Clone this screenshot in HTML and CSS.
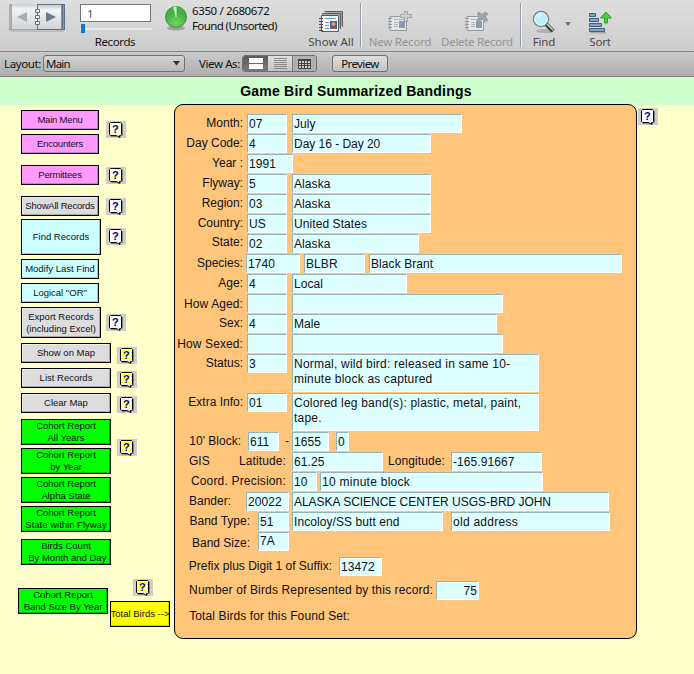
FILE: index.html
```html
<!DOCTYPE html>
<html lang="en">
<head>
<meta charset="utf-8">
<title>Game Bird Summarized Bandings</title>
<link rel="stylesheet" href="styles.css">
</head>
<body>
<svg class="defs" width="0" height="0">
  <defs>
    <g id="note-frame">
      <path d="M5 15.500H12M16.500 3V14.500H14.500V16.500" fill="none" stroke="#808080"/>
      <path d="M4.500 1.500H14.500L15.500 2.500V13.500L14.500 14.500H13.500V16.500L10.500 14.500H4.500L3.500 13.500V2.500Z" fill="#fff" stroke="#000"/>
    </g>
    <path id="dots" d="M5 3.500H15M4 5.500H15M5 7.500H15M4 9.500H15M5 11.500H15M4 13.500H14" stroke-dasharray="1 1" fill="none" shape-rendering="crispEdges"/>
    <symbol id="help" viewBox="0 0 20 17"><rect width="20" height="17" fill="#d0cdc9"/><use href="#note-frame"/><use href="#dots" stroke="#ffff99"/><text x="6" y="12">?</text></symbol>
    <symbol id="help-yellow" viewBox="0 0 20 17"><rect width="20" height="17" fill="#d0cdc9"/><use href="#note-frame"/><use href="#dots" stroke="#ffff00"/><path d="M4 4.500H15M5 6.500H15M4 8.500H15M5 10.500H15M4 12.500H15" stroke="#ffff66" stroke-dasharray="1 1" shape-rendering="crispEdges"/><text x="6" y="12">?</text></symbol>
    <symbol id="card" viewBox="0 0 24 24">
      <path d="M3 6.500H19.500V20.500H3Z" fill="#f4f5f6" stroke="#56606b"/>
      <path d="M1 8.500h4M1 11.500h4M1 14.500h4M1 17.500h4" stroke="#56606b"/>
      <path d="M7 9.500h10M7 12.500h4M7 14.500h4M7 16.500h4" stroke="#8494a5"/>
      <rect x="12" y="11" width="6" height="7" fill="#46648a"/>
    </symbol>
  </defs>
</svg>

<header class="toolbar">
  <svg class="book" width="60" height="32" viewBox="0 0 60 32">
    <defs><linearGradient id="page" x2="0" y2="1"><stop stop-color="#c9ced2"/><stop offset=".2" stop-color="#f2f3f4"/><stop offset="1" stop-color="#d2d3d4"/></linearGradient></defs>
    <path d="M2 26h56l-2 2H4z" fill="#bdbdbd"/>
    <rect x="2" y="0" width="2" height="26" fill="#adb0b3"/><rect x="4" y="0" width="26" height="25" fill="url(#page)"/>
    <rect x="30" y="0" width="28" height="26" fill="#8794a2"/><rect x="30" y="1" width="24" height="24" fill="url(#page)"/>
    <path d="M2 25.500H30M4.500 0V25" stroke="#a4a8ab"/><path d="M30.500 0V25.500H57.500V0M55.500 0V25M30 .5H58" fill="none" stroke="#5e7184"/>
    <path d="M28.500 5.500h4v3h-4zM28.500 11.500h4v3h-4zM28.500 17.500h4v3h-4z" fill="#eee" stroke="#65727f"/>
    <path d="M20 8v10l-10-5z" fill="#a9acae"/><path d="M39 8v10l10-5z" fill="#6a7b8b"/>
  </svg>
  <div class="records">
    <div class="record-no">1</div>
    <div class="slider"><span></span></div>
    <div class="caption black">Records</div>
  </div>
  <svg class="pie" width="26" height="30" viewBox="0 0 26 30">
    <defs><radialGradient id="ball" cy=".8"><stop stop-color="#72d65b"/><stop offset="1" stop-color="#45b045"/></radialGradient></defs>
    <ellipse cx="13" cy="25" rx="9" ry="2.500" fill="#8a8f89" opacity=".7"/>
    <circle cx="13" cy="14" r="10.500" fill="url(#ball)" stroke="#3c9a43"/>
    <path d="M13 14L10 4.500q1.500-1 3-1z" fill="#b8efad"/><path d="M13 4v10" stroke="#d0f7c8"/>
  </svg>
  <div class="found">6350 / 2680672<br><span>Found (Unsorted)</span></div>
  <div class="tool show-all">
    <svg width="26" height="24" viewBox="0 0 26 24">
      <path d="M6.500 1.500H24.500V17M4.500 4.500V3.500H22.500V19" fill="#a4a8ab" stroke="#5a5e62"/>
      <path d="M3.500 5.500H20.500V21.500H3.500Z" fill="#f7f8f9" stroke="#555b62"/>
      <path d="M1 8.500h4M1 11.500h4M1 14.500h4M1 17.500h4M1 20.500h4" stroke="#454c54"/>
      <path d="M7 8.500h11M7 12.500h4M7 15.500h4M7 18.500h4" stroke="#6a9ccc"/>
      <rect x="12" y="11" width="7" height="8" fill="#47658c"/><circle cx="15.500" cy="14" r="2" fill="#ef9a62"/><path d="M13 19q2.500-4 5 0z" fill="#d44d1e"/>
    </svg>
    <div class="caption">Show All</div>
  </div>
  <i class="rule"></i>
  <div class="tool new-record dim">
    <svg width="26" height="24" viewBox="0 0 26 24"><use href="#card" width="24" height="24"/><path d="M17.500 1.500h3v3h4v3h-4v4h-3v-4h-4v-3h4z" fill="#c6cbd0" stroke="#66717c"/></svg>
    <div class="caption">New Record</div>
  </div>
  <div class="tool delete-record dim">
    <svg width="26" height="24" viewBox="0 0 26 24"><use href="#card" width="24" height="24"/><path d="M15 2l3 2.500L21 2l3 2-3 3 3 3-3 2-3-3-3 3-2-2 2.500-3L13 4z" fill="#68727b" stroke="#59636d"/></svg>
    <div class="caption">Delete Record</div>
  </div>
  <i class="rule"></i>
  <div class="tool find">
    <svg width="26" height="24" viewBox="0 0 26 24">
      <ellipse cx="14" cy="21" rx="9" ry="2" fill="#9a9a9a" opacity=".65"/>
      <path d="M15 14l7 7" stroke="#353535" stroke-width="4"/><path d="M16 14l6 6" stroke="#ddd" stroke-width="1.500"/>
      <circle cx="10" cy="9" r="7.500" fill="#b8edf9" stroke="#77868e" stroke-width="1.500"/><circle cx="10" cy="9" r="6.200" fill="none" stroke="#f3ffff"/><path d="M6 8q1-4 6-3-4 1-6 3z" fill="#fff"/>
    </svg>
    <div class="caption">Find</div>
  </div>
  <svg class="arrow" width="6" height="4" viewBox="0 0 6 4"><path d="M0 0h6L3 4z" fill="#737373"/></svg>
  <div class="tool sort">
    <svg width="26" height="24" viewBox="0 0 26 24">
      <path d="M3 22.500h16" stroke="#aaa" stroke-width="2"/>
      <g fill="#86a3c2" stroke="#3f5f82"><path d="M2.500 3.500h6v3h-6zM2.500 8.500h9v3h-9zM2.500 13.500h12v3h-12zM2.500 18.500h15v3h-15z"/></g>
      <path d="M19 2l5.500 6H20.500v5h-3V8H13.500z" fill="#45cf38" stroke="#2fa42a"/>
    </svg>
    <div class="caption">Sort</div>
  </div>
</header>

<nav class="layoutbar">
  <span class="layout-label">Layout:</span>
  <div class="select">Main<svg width="7" height="5" viewBox="0 0 7 5"><path d="M0 0h7L3.500 4.500z" fill="#333"/></svg></div>
  <span class="view-label">View As:</span>
  <div class="views">
    <span class="on"><svg width="14" height="11" viewBox="0 0 14 11"><path d="M0 0h14v5H0zM0 6h14v5H0z" fill="#fff"/></svg></span>
    <span><svg width="13" height="11" viewBox="0 0 13 11"><path d="M0 .5h13M0 2.500h13M0 4.500h13M0 6.500h13M0 8.500h13M0 10.500h13" stroke="#8c8c8c"/></svg></span>
    <span class="table"><svg width="13" height="10" viewBox="0 0 13 10"><path d="M0 0h13v10H0z" fill="#444"/><path d="M1 2h2v2H1zM4 2h2v2H4zM7 2h2v2H7zM10 2h2v2h-2zM1 5h2v1H1zM4 5h2v1H4zM7 5h2v1H7zM10 5h2v1h-2zM1 7h2v2H1zM4 7h2v2H4zM7 7h2v2H7zM10 7h2v2h-2z" fill="#ccc"/></svg></span>
  </div>
  <div class="preview">Preview</div>
</nav>

<h1 class="title">Game Bird Summarized Bandings</h1>

<main class="page">
  <aside class="side">
    <div class="group g-menu">
      <div class="stack"><div class="btn pink">Main Menu</div><div class="btn pink">Encounters</div></div>
      <svg class="help h11"><use href="#help"/></svg>
    </div>
    <div class="group g-permit"><div class="btn pink">Permittees</div><svg class="help h2"><use href="#help"/></svg></div>
    <div class="group g-permit"><div class="btn grey showall">ShowAll Records</div><svg class="help h2"><use href="#help"/></svg></div>
    <div class="group g3"><div class="btn cyan big">Find Records</div><svg class="help h9"><use href="#help"/></svg></div>
    <div class="group g4"><div class="btn cyan">Modify Last Find</div></div>
    <div class="group g4"><div class="btn cyan">Logical "OR"</div></div>
    <div class="group g4"><div class="btn grey export">Export Records<br>(including Excel)</div><svg class="help h7"><use href="#help"/></svg></div>
    <div class="group g5"><div class="btn grey wide">Show on Map</div><svg class="help h4"><use href="#help-yellow"/></svg></div>
    <div class="group g5"><div class="btn grey wide">List Records</div><svg class="help h3"><use href="#help-yellow"/></svg></div>
    <div class="group g5"><div class="btn grey wide">Clear Map</div><svg class="help h3"><use href="#help-yellow"/></svg></div>
    <div class="group g6"><div class="btn green">Cohort Report<br>All Years</div><svg class="help h20"><use href="#help-yellow"/></svg></div>
    <div class="group g3"><div class="btn green">Cohort Report<br>by Year</div></div>
    <div class="group g3"><div class="btn green">Cohort Report<br>Alpha State</div></div>
    <div class="group g3"><div class="btn green">Cohort Report<br>State within Flyway</div></div>
    <div class="group g7"><div class="btn green">Birds Count<br>&nbsp;By Month and Day</div></div>
    <div class="group totals">
      <div class="btn green">Cohort Report<br>Band Size By Year</div>
      <div class="total"><svg class="help"><use href="#help-yellow"/></svg><div class="btn yellow">Total Birds --&gt;</div></div>
    </div>
  </aside>

  <section class="panel">
    <div class="row"><label>Month:</label><b class="w40">07</b><b class="w170">July</b></div>
    <div class="row"><label>Day Code:</label><b class="w40">4</b><b class="w139 snug">Day 16 - Day 20</b></div>
    <div class="row"><label>Year :</label><b class="w46">1991</b></div>
    <div class="row"><label>Flyway:</label><b class="w40">5</b><b class="w139">Alaska</b></div>
    <div class="row"><label>Region:</label><b class="w40">03</b><b class="w139">Alaska</b></div>
    <div class="row"><label>Country:</label><b class="w40">US</b><b class="w139">United States</b></div>
    <div class="row raised"><label>State:</label><b class="w40">02</b><b class="w127">Alaska</b></div>
    <div class="row species"><label>Species:</label><b class="w54">1740</b><b class="w61">BLBR</b><b class="w253">Black Brant</b></div>
    <div class="row"><label>Age:</label><b class="w40">4</b><b class="w115">Local</b></div>
    <div class="row lowered"><label>How Aged:</label><b class="w40"></b><b class="w211">&nbsp;</b></div>
    <div class="row"><label>Sex:</label><b class="w40">4</b><b class="w205">Male</b></div>
    <div class="row lowered"><label>How Sexed:</label><b class="w40"></b><b class="w211">&nbsp;</b></div>
    <div class="row tall"><label>Status:</label><b class="w40">3</b><b class="note">Normal, wild bird: released in same 10-<br>minute block as captured</b></div>
    <div class="row tall"><label>Extra Info:</label><b class="w40">01</b><b class="note">Colored leg band(s): plastic, metal, paint,<br>tape.</b></div>
    <div class="row block"><label>10' Block:</label><b class="w31">611</b><span class="dash">-</span><b class="w37">1655</b><b class="w13">0</b></div>
    <div class="row gis"><label>GIS</label><label class="lat">Latitude:</label><b class="w91">61.25</b><label class="lon">Longitude:</label><b class="w91">-165.91667</b></div>
    <div class="row coord"><label>Coord. Precision:</label><b class="w25">10</b><b class="w223 loose">10 minute block</b></div>
    <div class="row bander"><label>Bander:</label><b class="w43">20022</b><b class="w317 snug">ALASKA SCIENCE CENTER USGS-BRD JOHN</b></div>
    <div class="row type"><label>Band Type:</label><b class="w31">51</b><b class="w151">Incoloy/SS butt end</b><b class="w159 loose">old address</b></div>
    <div class="row size"><label>Band Size:</label><b class="w31">7A</b></div>
    <div class="row prefix"><label>Prefix plus Digit 1 of Suffix:</label><b class="w43">13472</b></div>
    <div class="row number"><label>Number of Birds Represented by this record:</label><b class="w43">75</b></div>
    <div class="row foundset"><label>Total Birds for this Found Set:</label></div>
  </section>
  <svg class="help panel-help"><use href="#help"/></svg>
</main>
</body>
</html>
```
FILE: styles.css
```css
* { box-sizing: border-box; }
body { margin: 0; width: 694px; height: 674px; overflow: hidden; background: #ffffcc; color: #101018; font: 12px/15px "Liberation Sans", sans-serif; }
svg { display: block; flex: none; }
.defs { position: absolute; }

.toolbar { display: flex; height: 52px; background: linear-gradient(#dedede, #cdcdcd); border-bottom: 1px solid #858585; font: 12px/15px "Noto Sans", sans-serif; }
.book { margin: 4px 0 0 7px; }
.records { width: 72px; margin: 4px 0 0 13px; }
.record-no { width: 71px; height: 18px; background: #fff; border: 1px solid #777; padding: 0 6px; font-size: 11.500px; line-height: 17px; color: #555; }
.slider { height: 9px; margin-top: 2px; display: flex; align-items: center; background: linear-gradient(transparent 4px, #e6e9e9 4px, #e6e9e9 6px, transparent 6px); }
.slider span { width: 4px; height: 9px; background: #0879d8; margin-left: 1px; }
.caption { font-size: 11.500px; line-height: 16px; text-align: center; white-space: nowrap; color: #4a4a4a; }
.black { color: #111; margin-top: 1px; padding-right: 2px; letter-spacing: -.4px; }
.pie { margin: 3px 0 0 11px; }
.found { margin: 3px 0 0 3px; width: 110px; font-size: 11.500px; line-height: 15px; letter-spacing: -.37px; color: #111; white-space: nowrap; }
.found span { letter-spacing: -.6px; }
.tool { display: flex; flex-direction: column; align-items: center; padding-top: 10px; }
.tool .caption { margin-top: 0; }
.show-all { width: 50px; margin-left: 4px; }
.rule { width: 2px; height: 44px; margin-top: 3px; background: linear-gradient(90deg, #929cab 1px, #f5f5f5 1px); }
.show-all + .rule { margin-left: 4px; }
.new-record { width: 62px; margin-left: 7px; letter-spacing: -.2px; }
.delete-record { width: 72px; margin-left: 10px; letter-spacing: -.3px; }
.delete-record + .rule { margin-left: 7px; }
.dim svg { opacity: .5; }
.dim .caption { color: #969696; }
.find { width: 26px; margin-left: 9px; letter-spacing: -.2px; }
.arrow { margin: 22px 0 0 8px; }
.sort { width: 26px; margin-left: 16px; letter-spacing: -.2px; }

.layoutbar { display: flex; height: 25px; align-items: flex-start; padding-top: 3px; background: linear-gradient(#cbcbcb, #adadad); border-bottom: 1px solid #828282; font: 11.500px/17px "Noto Sans", sans-serif; letter-spacing: -.4px; color: #111; white-space: nowrap; }
.layout-label { width: 39px; margin-left: 4px; }
.select { display: flex; align-items: center; justify-content: space-between; width: 142px; height: 17px; padding: 0 4px 0 2px; border: 1px solid #707070; border-radius: 3px; background: linear-gradient(#d4d4d4, #b8b8b8); letter-spacing: -.8px; }
.view-label { width: 43px; margin-left: 14px; }
.views { display: flex; height: 17px; border: 1px solid #707070; border-radius: 3px; background: linear-gradient(#e0e0e0, #c3c3c3); overflow: hidden; }
.views span { display: flex; width: 24px; align-items: center; justify-content: center; }
.views .on { width: 25px; background: linear-gradient(#5c5c5c, #777); }
.views .table { background: #b0b0b0; border-left: 1px solid #777; }
.preview { width: 56px; height: 17px; margin-left: 15px; line-height: 15px; text-align: center; letter-spacing: -.6px; border: 1px solid #707070; border-radius: 3px; background: linear-gradient(#dedede, #c2c2c2); }

.title { margin: 0; height: 28px; padding-left: 18px; background: #ccffcc; font-size: 14px; line-height: 28px; text-align: center; letter-spacing: .2px; color: #000; }

.page { display: flex; align-items: flex-start; }
.side { width: 174px; padding: 5px 0 0 21px; font-size: 9.500px; line-height: 12px; color: #101018; }
.group { display: flex; align-items: flex-start; }
.stack { display: grid; gap: 4px; }
.btn { display: flex; flex: none; align-items: center; justify-content: center; width: 78px; height: 20px; border: 1px solid #000; text-align: center; white-space: nowrap; }
.pink { background: #ff99ff; box-shadow: inset -1px -1px #c77bd0; letter-spacing: -.2px; }
.showall { letter-spacing: -.2px; }
.grey { background: #dddddd; box-shadow: inset -1px -1px #aaa, inset 1px 1px #eee; }
.cyan { background: #ccffff; box-shadow: inset -1px -1px #99cccc; }
.green { width: 90px; height: 26px; padding-bottom: 1px; background: #00ff00; box-shadow: inset -1px -1px #00bb00; }
.yellow { width: 60px; height: 26px; background: #ffff00; box-shadow: inset -1px -1px #cccc00; }
.big { width: 80px; height: 36px; }
.export { width: 80px; height: 31px; }
.wide { width: 90px; }
.help { width: 20px; height: 17px; margin-left: 7px; margin-bottom: -11px; }
.help text, symbol text { font: bold 11px "Liberation Sans", sans-serif; fill: #000080; }
.big + .help, .export + .help { margin-left: 5px; }
.wide + .help, .green + .help { margin-left: 6px; }
.h2 { margin-top: 2px; } .h3 { margin-top: 3px; } .h4 { margin-top: 4px; } .h7 { margin-top: 7px; }
.h9 { margin-top: 9px; } .h11 { margin-top: 11px; } .h20 { margin-top: 20px; }
.g-permit { margin-top: 11px; }
.g3 { margin-top: 3px; } .g4 { margin-top: 4px; } .g5 { margin-top: 5px; } .g6 { margin-top: 6px; } .g7 { margin-top: 7px; }
.totals { margin: 14px 0 0 -3px; }
.totals > .btn { margin-top: 9px; }
.total { margin-left: 2px; }
.total .help { margin: 0 0 5px 23px; }

.panel { width: 463px; height: 535px; margin-top: -1px; padding-top: 9px; border: 1px solid #000; border-radius: 9px; background: #ffc67b; }
.panel-help { margin: 3px 0 0 1px; }
.row { display: flex; align-items: flex-start; height: 20px; white-space: nowrap; }
.row label { width: 68px; margin-right: 4px; padding-top: 2px; text-align: right; flex: none; }
.row b { display: block; flex: none; height: 19px; padding: 2px 0 0 1px; font-weight: normal; letter-spacing: .08px; background: #ddffff; border: 1px solid #fff; border-top-color: #94b5b5; border-left-color: #94b5b5; }
.row b + b { margin-left: 5px; }
.row .snug { letter-spacing: -.03px; }
.row .loose { letter-spacing: .27px; }
.raised label { padding-top: 1px; }
.lowered label { padding-top: 3px; letter-spacing: .1px; }
.tall { height: 39px; }
.row .note { width: 247px; height: 38px; letter-spacing: .21px; }
.row.species label { margin-right: 3px; }
.species b + b { margin-left: 4px; }
.w13 { width: 13px; } .w25 { width: 25px; } .w31 { width: 31px; } .w37 { width: 37px; } .w40 { width: 40px; }
.w43 { width: 43px; } .w46 { width: 46px; } .w54 { width: 54px; } .w61 { width: 61px; } .w91 { width: 91px; }
.w115 { width: 115px; } .w127 { width: 127px; } .w139 { width: 139px; } .w151 { width: 151px; } .w159 { width: 159px; }
.w170 { width: 170px; } .w205 { width: 205px; } .w211 { width: 211px; } .w223 { width: 223px; } .w253 { width: 253px; } .w317 { width: 317px; }
.row.block label { width: 66px; margin-right: 7px; }
.dash { width: 13px; padding: 2px 0 0 6px; }
.block b + b { margin-left: 7px; }
.row.gis label { width: 34px; margin: 0 0 0 14px; text-align: left; }
.row.gis .lat { width: 63px; margin: 0 6px 0 0; text-align: right; letter-spacing: .1px; }
.row.gis .lon { width: 62px; margin: 0 6px 0 0; text-align: right; letter-spacing: .1px; }
.row.coord label { width: 111px; margin-right: 6px; letter-spacing: .18px; }
.coord b + b { margin-left: 3px; }
.row.bander label { width: 56px; margin-right: 15px; }
.bander b + b { margin-left: 3px; }
.row.type label, .row.size label { width: 75px; margin-right: 8px; }
.type b + b { margin-left: 3px; }
.type b + b + b { margin-left: 8px; }
.row.size label { padding-top: 4px; }
.size b { padding-top: 1px; }
.row.prefix { height: 24px; margin-top: 5px; }
.row.prefix label { width: 157px; margin-right: 7px; }
.row.number label { width: 258px; margin-right: 3px; letter-spacing: .15px; }
.number b { text-align: right; padding-right: 1px; }
.row.foundset { margin-top: 6px; }
.row.foundset label { width: 175px; letter-spacing: .11px; }
```
